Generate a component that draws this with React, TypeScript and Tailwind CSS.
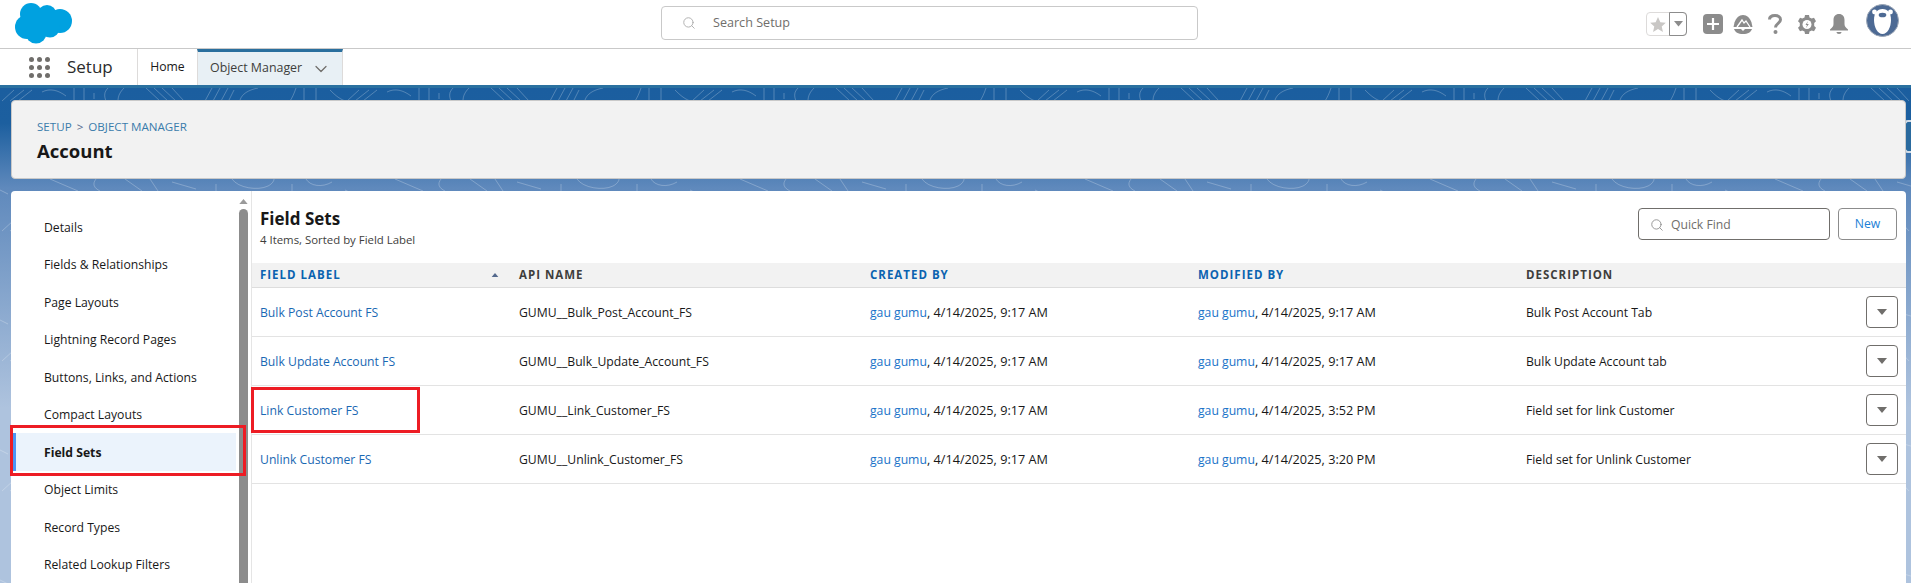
import React from "react";
import { ChevronDown, Search } from "lucide-react";

const side = ["Details","Fields & Relationships","Page Layouts","Lightning Record Pages","Buttons, Links, and Actions","Compact Layouts","Field Sets","Object Limits","Record Types","Related Lookup Filters"];
const rows = [
  ["Bulk Post Account FS","GUMU__Bulk_Post_Account_FS","4/14/2025, 9:17 AM","4/14/2025, 9:17 AM","Bulk Post Account Tab"],
  ["Bulk Update Account FS","GUMU__Bulk_Update_Account_FS","4/14/2025, 9:17 AM","4/14/2025, 9:17 AM","Bulk Update Account tab"],
  ["Link Customer FS","GUMU__Link_Customer_FS","4/14/2025, 9:17 AM","4/14/2025, 3:52 PM","Field set for link Customer"],
  ["Unlink Customer FS","GUMU__Unlink_Customer_FS","4/14/2025, 9:17 AM","4/14/2025, 3:20 PM","Field set for Unlink Customer"],
];
const cols = "grid grid-cols-[259px_351px_328px_328px_1fr]";

function Cloud() {
  return (
    <svg width="58" height="44" viewBox="0 0 58 44" className="ml-[15px]">
      <g fill="#00a1e0">
        <circle cx="16" cy="12" r="11" /><circle cx="32" cy="12.500" r="9.500" />
        <circle cx="45" cy="19" r="12" /><circle cx="12" cy="25" r="12" /><circle cx="21" cy="31" r="10.500" />
        <circle cx="35" cy="26" r="9.500" /><rect x="12" y="10" width="32" height="20" />
      </g>
    </svg>
  );
}

function Waffle() {
  return (
    <div className="grid grid-cols-3 gap-x-[3px] gap-y-[3px] w-[21px]">
      {Array.from({ length: 9 }).map((_, i) => <span key={i} className="block w-[5px] h-[5px] rounded-full bg-[#706e6b]" />)}
    </div>
  );
}

function Caret({ c = "#706e6b", w = 10, up = false }: { c?: string; w?: number; up?: boolean }) {
  return <svg width={w} height={w * 0.6} viewBox="0 0 10 6"><path d={up ? "M0 6h10L5 0z" : "M0 0h10L5 6z"} fill={c} /></svg>;
}

function TopIcons() {
  return (
    <div className="flex items-center">
      <div className="flex h-[24px] w-[41px] rounded-[4px] border border-[#dddbda] mr-[16px]">
        <div className="w-[22px] flex items-center justify-center">
          <svg width="16" height="15" viewBox="0 0 24 23"><path d="M12 0l3.600 8 8.400.8-6.300 5.600 1.900 8.600L12 18.500 4.400 23l1.900-8.600L0 8.800 8.400 8z" fill="#c9c7c5" /></svg>
        </div>
        <div className="flex-1 border border-[#8c8c8c] flex items-center justify-center rounded-r-[4px] -my-px -mr-px">
          <Caret c="#8c8c8c" w={9} />
        </div>
      </div>
      <div className="w-[20px] h-[20px] rounded-[4px] bg-[#8c8c8c] flex items-center justify-center mr-[10px]">
        <svg width="12" height="12" viewBox="0 0 12 12"><path d="M6 0v12M0 6h12" stroke="#fff" strokeWidth="2.200" /></svg>
      </div>
      <svg width="20" height="19" viewBox="0 0 20 19" className="mr-[15px]">
        <path d="M10 0c4 0 7 3 8.500 7.500L19.500 12H.5l1-4.500C3 3 6 0 10 0z" fill="#8c8c8c" />
        <path d="M4 12l5-7 2 3 2-2 4 6" fill="none" stroke="#fff" strokeWidth="1.300" />
        <path d="M1 14h7l2 2 2-2h7c-1 3-4 5-9 5s-8-2-9-5z" fill="#8c8c8c" />
      </svg>
      <svg width="14" height="20" viewBox="0 0 14 20" className="mr-[16px]">
        <path d="M1.500 5.500C1.500 3 3.800 1.500 7 1.500s5.500 1.700 5.500 4.200c0 3.600-5 3.700-5 7.800" fill="none" stroke="#8c8c8c" strokeWidth="3" />
        <circle cx="7.500" cy="18" r="2" fill="#8c8c8c" />
      </svg>
      <svg width="18" height="19" viewBox="0 0 18 19" className="mr-[13px]">
        <path d="M7 0h4l.5 2.500 2.200 1.100L16 2.700l2 3.500-1.800 1.700v3.200L18 12.800l-2 3.500-2.300-.9-2.200 1.100L11 19H7l-.5-2.500-2.200-1.100L2 16.300 0 12.800l1.800-1.700V7.900L0 6.200l2-3.500 2.300.9 2.200-1.100z" fill="#8c8c8c" />
        <circle cx="9" cy="9.500" r="4.500" fill="#fff" />
        <path d="M10 6l-2.500 4H9l-1 3 2.800-4H9z" fill="#8c8c8c" />
      </svg>
      <svg width="20" height="20" viewBox="0 0 20 20" className="mr-[17px]">
        <path d="M10 0c3.500 0 5.500 2.500 5.500 6v4c0 2 1 3.500 3.500 5.500v1H1v-1C3.500 13.500 4.500 12 4.500 10V6C4.500 2.500 6.500 0 10 0z" fill="#8c8c8c" />
        <path d="M7.500 18h5c0 1.200-1 2-2.500 2s-2.500-.8-2.500-2z" fill="#8c8c8c" />
      </svg>
      <div className="w-[33px] h-[33px] mb-[7px] rounded-full bg-[#4d6a94] border border-[#9aa5b5] overflow-hidden flex items-center justify-center">
        <svg width="31" height="31" viewBox="0 0 31 31">
          <circle cx="7.500" cy="7" r="2.400" fill="#fff" /><circle cx="23.500" cy="7" r="2.400" fill="#fff" />
          <path d="M15.500 4C21 4 24 8 24 15c0 7-3.500 14-8.500 14S7 22 7 15C7 8 10 4 15.500 4z" fill="#fff" />
          <ellipse cx="15.500" cy="10" rx="3.800" ry="2.300" fill="#4d6a94" />
        </svg>
      </div>
    </div>
  );
}

function Pattern() {
  return (
    <svg className="absolute inset-0 w-full h-full" aria-hidden="true">
      <defs>
        <pattern id="topo" x="0" y="0" width="345" height="130" patternUnits="userSpaceOnUse">
          <g fill="none" stroke="#ffffff" strokeOpacity="0.24" strokeWidth="1">
            <path d="M2 13L14 2M10 13L24 2M18 13L32 2M42 4C50 0 58 2 66 8M74 0V13M84 0V13M94 5V11M108 0C104 4 104 8 106 13M124 0C120 4 118 8 118 13M146 0L160 13M154 0L168 13M162 0L176 13M172 0L184 13" />
            <path d="M205 13L212 0M213 13L220 0M221 13L228 0M229 12L234 2M240 12C242 6 248 2 258 0M296 0C294 6 292 10 290 13M304 0V13M316 0V13M330 2C334 6 338 10 345 13" />
            <path d="M0 102L8 106M50 91L78 103M96 91C92 96 94 100 100 103M125 91L142 103M150 91L158 103M172 94L196 101M216 96V103M232 91C238 100 258 103 268 98C272 96 274 93 274 91M292 96V103M306 91C310 98 322 100 332 94" />
          </g>
        </pattern>
      </defs>
      <rect x="0" y="0" width="100%" height="100%" fill="url(#topo)" />
    </svg>
  );
}

export default function App() {
  return (
    <div className="w-[1911px] h-[583px] overflow-hidden bg-white text-[#181818] font-['Open_Sans','Noto_Sans',sans-serif] text-[12.2px] flex flex-col">
      <header className="h-[49px] shrink-0 border-b border-[#c9c9c9] flex items-center relative pr-[12px]">
        <Cloud />
        <div className="absolute left-[661px] top-[6px] w-[537px] h-[34px] rounded-[4px] border border-[#c9c9c9] flex items-center pl-[20px] text-[12.600px] text-[#706e6b]">
          <Search size={14} strokeWidth={1.500} className="text-[#a8a8a8] mr-[17px]" />
          <span>Search Setup</span>
        </div>
        <div className="ml-auto"><TopIcons /></div>
      </header>

      <nav className="h-[36px] shrink-0 flex items-stretch">
        <div className="flex items-center w-[138px] pl-[29px] border-r border-[#dddbda]">
          <Waffle />
          <span className="ml-[17px] text-[17px] text-[#2b2b2b]">Setup</span>
        </div>
        <div className="w-[59px] flex items-center justify-center text-[#181818]">Home</div>
        <div className="w-[146px] flex items-center pl-[12px] bg-[#e8f0f5] border-t-[3px] border-[#2a6f9e] border-x border-x-[#dddbda] text-[#3e3e3c] text-[12.400px]">
          <span>Object Manager</span>
          <ChevronDown size={20} strokeWidth={1.500} className="ml-auto mr-[11px] text-[#706e6b]" />
        </div>
      </nav>

      <main className="relative flex-1 min-h-0 border-t-[3px] border-[#2a71a0] bg-[linear-gradient(to_bottom,#1b5e9f_0px,#1c5f9f_35px,#5f89bc_100px,#aec3de_320px)] pt-[12px] pl-[11px] pr-[5px]">
        <Pattern />
        <div className="absolute right-0 top-[32px] w-[7px] h-[33px] rounded-l-[4px] border-2 border-r-0 border-[#cfdbe8] bg-[#2a6a9e]" />
        <section className="relative h-[79px] rounded-[4px] bg-[#f2f2f2] border border-[#c9c9c9] pl-[25px] pt-[18px]">
          <div className="leading-[16px] text-[11.600px] text-[#3a7cab]">SETUP<span className="text-[#54698d] mx-[5px]">&gt;</span>OBJECT MANAGER</div>
          <h1 className="text-[18.500px] leading-[24px] font-bold mt-[4px]">Account</h1>
        </section>

        <section className="relative mt-[12px] h-[400px] rounded-t-[4px] bg-white flex">
          <aside className="relative w-[228px] shrink-0 pt-[17px] pl-[2px]">
            {side.map((s) => (
              <div key={s} className={s === "Field Sets"
                ? "h-[37.500px] flex items-center pl-[28px] pt-[2px] font-bold bg-[#ebf3fc] border-l-[3px] border-[#4c95f5] w-[223px]"
                : "h-[37.500px] flex items-center pl-[31px] pt-[2px]"}>{s}</div>
            ))}
            <div className="absolute left-[-1px] top-[234px] w-[236px] h-[51px] border-[3px] border-[#ed1c24]" />
          </aside>
          <div className="w-[12px] shrink-0 flex flex-col items-center pr-[3px]">
            <div className="h-[8px] mt-[6px] flex items-center"><svg width="9" height="5" viewBox="0 0 10 6"><path d="M0 6h10L5 0z" fill="#9a9a9a" /></svg></div>
            <div className="mt-[4px] w-[9px] flex-1 rounded-t-[5px] bg-[#8c8c8c]" />
          </div>
          <div className="relative flex-1 min-w-0 border-l border-[#e5e5e5]">
            <div className="h-[72px] pl-[8px] flex items-start justify-between pr-[9px]">
              <div className="pt-[18px]">
                <h2 className="text-[17px] leading-[19px] font-bold">Field Sets</h2>
                <p className="text-[11.400px] leading-[14px] mt-[5px] text-[#3e3e3c]">4 Items, Sorted by Field Label</p>
              </div>
              <div className="flex pt-[17px] gap-[8px]">
                <div className="w-[192px] h-[32px] rounded-[4px] border border-[#706e6b] flex items-center pl-[11px] pt-[2px] text-[#706e6b]">
                  <Search size={14} strokeWidth={1.500} className="text-[#8c8c8c] mr-[7px]" />
                  <span>Quick Find</span>
                </div>
                <div className="w-[59px] h-[32px] rounded-[4px] border border-[#8c8c8c] flex items-center justify-center pt-[1px] text-[#1b7fd6]">New</div>
              </div>
            </div>
            <div className={`${cols} h-[25px] bg-[#f2f2f2] border-b border-[#dddddd] items-center text-[11.500px] font-bold tracking-[1px] text-[#0b63b0]`}>
              <div className="pl-[8px] flex items-center pr-[12px]"><span>FIELD LABEL</span><span className="ml-auto"><Caret c="#54698d" w={8} up /></span></div>
              <div className="pl-[8px] text-[#3e3e3c]">API NAME</div>
              <div className="pl-[8px]">CREATED BY</div>
              <div className="pl-[8px]">MODIFIED BY</div>
              <div className="pl-[8px] text-[#3e3e3c]">DESCRIPTION</div>
            </div>
            {rows.map((r) => (
              <div key={r[0]} className={`${cols} h-[49px] border-b border-[#e3e3e3] items-center`}>
                <div className="pl-[8px] pt-[2px] text-[#1a68b3]">{r[0]}</div>
                <div className="pl-[8px] pt-[2px]">{r[1]}</div>
                <div className="pl-[8px] pt-[2px]"><span className="text-[#1a73c8]">gau gumu</span><span className="text-[12.700px]">, {r[2]}</span></div>
                <div className="pl-[8px] pt-[2px]"><span className="text-[#1a73c8]">gau gumu</span><span className="text-[12.700px]">, {r[3]}</span></div>
                <div className="pl-[8px] flex items-center justify-between pr-[8px]">
                  <span className="pt-[2px]">{r[4]}</span>
                  <span className="w-[32px] h-[32px] rounded-[4px] border border-[#706e6b] flex items-center justify-center"><Caret /></span>
                </div>
              </div>
            ))}
            <div className="absolute left-[-1px] top-[196px] w-[169px] h-[46px] border-[3px] border-[#ed1c24]" />
          </div>
        </section>
      </main>
    </div>
  );
}
